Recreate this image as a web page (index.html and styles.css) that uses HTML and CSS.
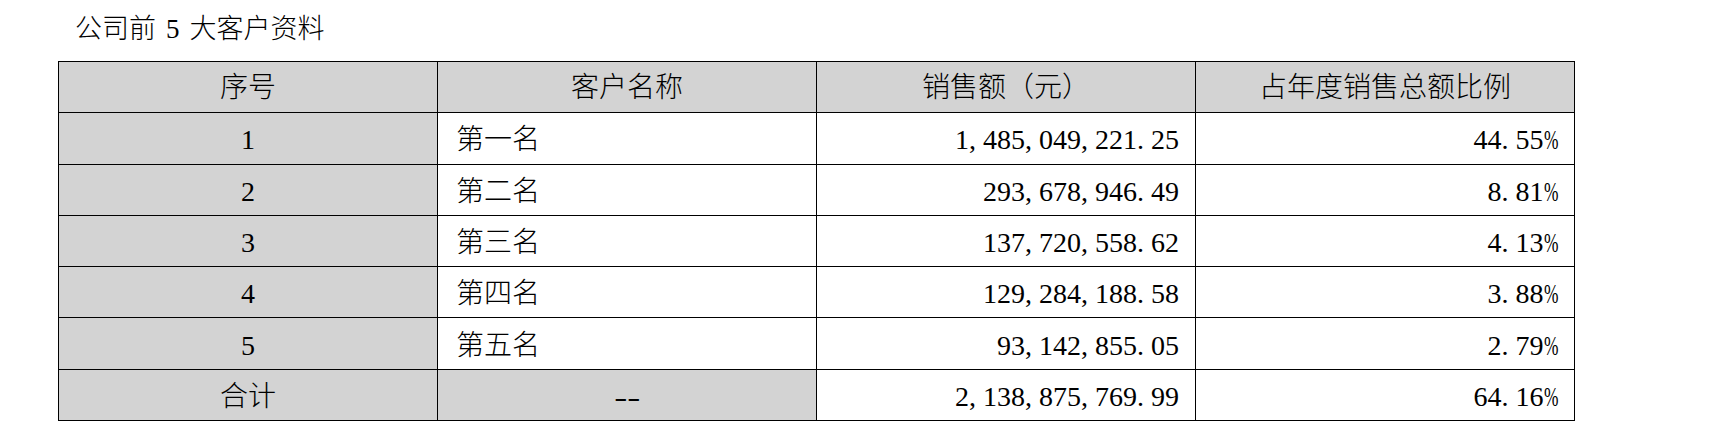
FILE: index.html
```html
<!DOCTYPE html>
<html lang="zh-CN">
<head>
<meta charset="utf-8">
<title>公司前5大客户资料</title>
<link rel="stylesheet" href="styles.css">
</head>
<body>
<div class="page">
  <div class="title">公司前 5 大客户资料</div>
  <table class="grid">
    <colgroup><col><col><col><col></colgroup>
    <thead>
      <tr>
        <th>序号</th>
        <th>客户名称</th>
        <th>销售额（元）</th>
        <th>占年度销售总额比例</th>
      </tr>
    </thead>
    <tbody>
      <tr>
        <td class="idx">1</td>
        <td class="name">第一名</td>
        <td class="num">1<span class="sep">,</span>485<span class="sep">,</span>049<span class="sep">,</span>221<span class="sep">.</span>25</td>
        <td class="num">44<span class="sep">.</span>55<span class="pct">%</span></td>
      </tr>
      <tr>
        <td class="idx">2</td>
        <td class="name">第二名</td>
        <td class="num">293<span class="sep">,</span>678<span class="sep">,</span>946<span class="sep">.</span>49</td>
        <td class="num">8<span class="sep">.</span>81<span class="pct">%</span></td>
      </tr>
      <tr>
        <td class="idx">3</td>
        <td class="name">第三名</td>
        <td class="num">137<span class="sep">,</span>720<span class="sep">,</span>558<span class="sep">.</span>62</td>
        <td class="num">4<span class="sep">.</span>13<span class="pct">%</span></td>
      </tr>
      <tr>
        <td class="idx">4</td>
        <td class="name">第四名</td>
        <td class="num">129<span class="sep">,</span>284<span class="sep">,</span>188<span class="sep">.</span>58</td>
        <td class="num">3<span class="sep">.</span>88<span class="pct">%</span></td>
      </tr>
      <tr>
        <td class="idx">5</td>
        <td class="name">第五名</td>
        <td class="num">93<span class="sep">,</span>142<span class="sep">,</span>855<span class="sep">.</span>05</td>
        <td class="num">2<span class="sep">.</span>79<span class="pct">%</span></td>
      </tr>
      <tr class="total">
        <td class="idx">合计</td>
        <td class="dash"><span class="dashes">--</span></td>
        <td class="num">2<span class="sep">,</span>138<span class="sep">,</span>875<span class="sep">,</span>769<span class="sep">.</span>99</td>
        <td class="num">64<span class="sep">.</span>16<span class="pct">%</span></td>
      </tr>
    </tbody>
  </table>
</div>
</body>
</html>
```

FILE: styles.css
```css
html, body {
  margin: 0;
  padding: 0;
  background: #ffffff;
}

body {
  font-family: "Liberation Serif", "Noto Sans CJK SC", serif;
  color: #000000;
}

.page {
  padding: 11px 0 0 58px;
}

.title {
  font-family: "Liberation Serif", "Noto Sans CJK SC", serif;
  font-weight: 300;
  font-size: 27px;
  line-height: 36px;
  height: 36px;
  padding-left: 17px;
  margin-bottom: 14px;
  word-spacing: 0.12em;
}

.grid {
  border-collapse: collapse;
  table-layout: fixed;
  width: 1517px;
  font-size: 28px;
  font-weight: 300;
}

.grid col {
  width: 25%;
}

.grid th,
.grid td {
  border: 1px solid #000000;
  height: 48.3px;
  padding: 2px 16px 0;
  line-height: 30px;
  vertical-align: middle;
  white-space: nowrap;
  overflow: hidden;
}

.grid td {
  padding-top: 4px;
  height: 46.3px;
}

.grid th {
  background: #d3d3d3;
  font-weight: 300;
  text-align: center;
}

.grid td.idx {
  background: #d3d3d3;
  text-align: center;
}

.grid td.name {
  text-align: left;
  padding-left: 18px;
}

.grid td.dash {
  background: #d3d3d3;
  text-align: center;
}

.dashes {
  display: inline-block;
  letter-spacing: 0;
  transform: scaleX(1.4);
}

.grid td.num {
  text-align: right;
}

.sep {
  display: inline-block;
  width: 0.5em;
  text-align: left;
}

.pct {
  display: inline-block;
  transform: scaleX(0.62);
  transform-origin: left center;
  margin-right: -8.9px;
}
```
